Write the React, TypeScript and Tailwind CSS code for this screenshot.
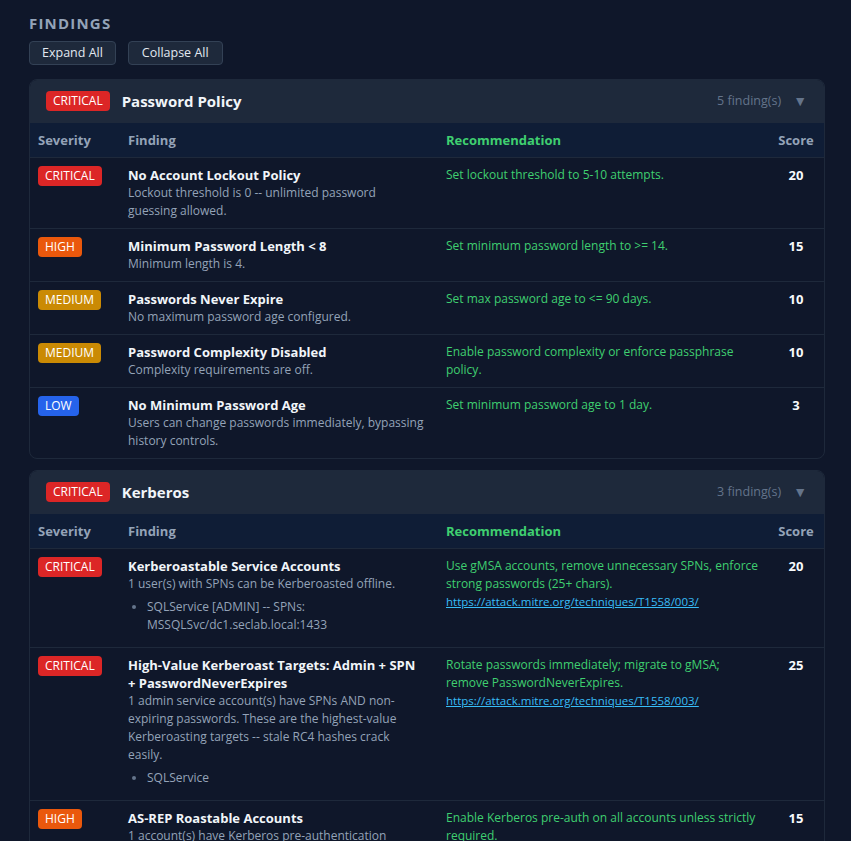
import { ReactNode } from "react"

type Severity = "CRITICAL" | "HIGH" | "MEDIUM" | "LOW"

type Finding = {
	severity: Severity
	title: string
	desc: string
	items?: string[]
	rec: string
	link?: string
	score: number
}

type Category = {
	name: string
	severity: Severity
	findings: Finding[]
}

const badgeColors: Record<Severity, string> = {
	CRITICAL: "bg-[#dc2626]",
	HIGH: "bg-[#ea580c]",
	MEDIUM: "bg-[#ca8a04]",
	LOW: "bg-[#2563eb]",
}

const mitre = "https://attack.mitre.org/techniques/T1558/003/"

const categories: Category[] = [
	{
		name: "Password Policy",
		severity: "CRITICAL",
		findings: [
			{
				severity: "CRITICAL",
				title: "No Account Lockout Policy",
				desc: "Lockout threshold is 0 -- unlimited password guessing allowed.",
				rec: "Set lockout threshold to 5-10 attempts.",
				score: 20,
			},
			{
				severity: "HIGH",
				title: "Minimum Password Length < 8",
				desc: "Minimum length is 4.",
				rec: "Set minimum password length to >= 14.",
				score: 15,
			},
			{
				severity: "MEDIUM",
				title: "Passwords Never Expire",
				desc: "No maximum password age configured.",
				rec: "Set max password age to <= 90 days.",
				score: 10,
			},
			{
				severity: "MEDIUM",
				title: "Password Complexity Disabled",
				desc: "Complexity requirements are off.",
				rec: "Enable password complexity or enforce passphrase policy.",
				score: 10,
			},
			{
				severity: "LOW",
				title: "No Minimum Password Age",
				desc: "Users can change passwords immediately, bypassing history controls.",
				rec: "Set minimum password age to 1 day.",
				score: 3,
			},
		],
	},
	{
		name: "Kerberos",
		severity: "CRITICAL",
		findings: [
			{
				severity: "CRITICAL",
				title: "Kerberoastable Service Accounts",
				desc: "1 user(s) with SPNs can be Kerberoasted offline.",
				items: ["SQLService [ADMIN] -- SPNs: MSSQLSvc/dc1.seclab.local:1433"],
				rec: "Use gMSA accounts, remove unnecessary SPNs, enforce strong passwords (25+ chars).",
				link: mitre,
				score: 20,
			},
			{
				severity: "CRITICAL",
				title: "High-Value Kerberoast Targets: Admin + SPN + PasswordNeverExpires",
				desc: "1 admin service account(s) have SPNs AND non-expiring passwords. These are the highest-value Kerberoasting targets -- stale RC4 hashes crack easily.",
				items: ["SQLService"],
				rec: "Rotate passwords immediately; migrate to gMSA; remove PasswordNeverExpires.",
				link: mitre,
				score: 25,
			},
			{
				severity: "HIGH",
				title: "AS-REP Roastable Accounts",
				desc: "1 account(s) have Kerberos pre-authentication disabled.",
				rec: "Enable Kerberos pre-auth on all accounts unless strictly required.",
				score: 15,
			},
		],
	},
]

function Badge({ severity }: { severity: Severity }) {
	return (
		<span
			className={`inline-block rounded-[4px] px-[7px] text-[12px] leading-[20px] text-white ${badgeColors[severity]}`}
		>
			{severity}
		</span>
	)
}

function Cell({ children, className = "" }: { children: ReactNode; className?: string }) {
	return <div className={`py-2 pl-2 ${className}`}>{children}</div>
}

const gridCols = "grid grid-cols-[90px_318px_1fr_56px]"

function CategoryCard({ category }: { category: Category }) {
	return (
		<section className="overflow-hidden rounded-lg border border-[#1e293b]">
			{/* Category header */}
			<div className="-mt-px flex items-center justify-between bg-[#1e293b] py-3 pl-4 pr-[17px]">
				<div className="flex items-center gap-3">
					<Badge severity={category.severity} />
					<h3 className="text-[15px] font-bold leading-5 text-[#f1f5f9]">{category.name}</h3>
				</div>
				<div className="flex items-center gap-3 text-[12.5px] leading-5 text-[#64748b]">
					<span>{category.findings.length} finding(s)</span>
					<span className="text-[14px]">▼</span>
				</div>
			</div>

			{/* Table head */}
			<div className={`${gridCols} bg-[#0f1d36] text-[13px] font-bold leading-[18px]`}>
				<Cell className="pr-2 text-[#94a3b8]">Severity</Cell>
				<Cell className="pr-2 text-[#94a3b8]">Finding</Cell>
				<Cell className="pr-2 text-[#3fcf70]">Recommendation</Cell>
				<Cell className="pr-2 text-center text-[#94a3b8]">Score</Cell>
			</div>

			{/* Rows */}
			{category.findings.map((f) => (
				<div
					key={f.title}
					className={`${gridCols} border-t border-[#1e293b] text-[12px] leading-[18px]`}
				>
					<Cell className="pr-2">
						<Badge severity={f.severity} />
					</Cell>
					<Cell className="pr-[13px]">
						<div className="text-[13px] font-bold text-[#f1f5f9]">{f.title}</div>
						<div className="text-[#94a3b8]">{f.desc}</div>
						{f.items && (
							<ul className="my-[5px] list-disc pl-[19px] text-[#94a3b8] marker:text-[#64748b]">
								{f.items.map((item) => (
									<li key={item}>{item}</li>
								))}
							</ul>
						)}
					</Cell>
					<Cell className="pr-1">
						<div className="text-[#3fcf70]">{f.rec}</div>
						{f.link && (
							<a href={f.link} className="block text-[11.5px] text-[#38bdf8] underline">
								{f.link}
							</a>
						)}
					</Cell>
					<Cell className="pr-2 text-center text-[13px] font-bold text-[#f8fafc]">{f.score}</Cell>
				</div>
			))}
		</section>
	)
}

export default function App() {
	return (
		<div
			className="min-h-screen bg-[#0f172a] pb-6 pl-[29px] pr-[26px] pt-[12px]"
			style={{ fontFamily: '"Open Sans", "Noto Sans", sans-serif' }}
		>
			<h2 className="text-[15px] font-bold uppercase leading-[22px] tracking-[1.2px] text-[#94a3b8]">
				Findings
			</h2>

			<div className="mt-[7px] flex gap-3">
				<button
					type="button"
					className="h-6 rounded-[4px] border border-[#334155] bg-[#1e293b] px-3 text-[12.5px] text-[#e2e8f0]"
				>
					Expand All
				</button>
				<button
					type="button"
					className="h-6 rounded-[4px] border border-[#334155] bg-[#1e293b] px-[13px] text-[12.5px] text-[#e2e8f0]"
				>
					Collapse All
				</button>
			</div>

			<div className="mt-[14px] flex flex-col gap-[11px]">
				{categories.map((c) => (
					<CategoryCard key={c.name} category={c} />
				))}
			</div>
		</div>
	)
}
